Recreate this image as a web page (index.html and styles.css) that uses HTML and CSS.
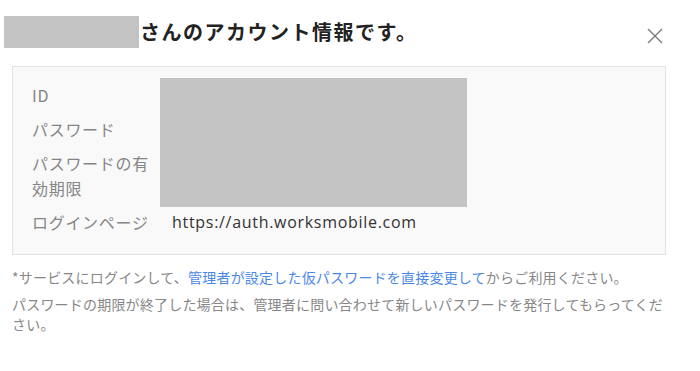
FILE: index.html
```html
<!DOCTYPE html>
<html lang="ja">
<head>
<meta charset="utf-8">
<title>アカウント情報</title>
<link rel="stylesheet" href="styles.css">
</head>
<body>
<div class="dialog">
  <div class="header">
    <h1 class="title"><span class="redact-name"></span>さんのアカウント情報です。</h1>
    <button class="close" aria-label="閉じる">
      <svg width="16" height="16" viewBox="0 0 16 16"><path d="M1 1L15 15M15 1L1 15" stroke="#7a7a7a" stroke-width="1.4" fill="none"/></svg>
    </button>
  </div>
  <div class="info">
    <div class="label r1">ID</div>
    <div class="label r2">パスワード</div>
    <div class="label r3">パスワードの有効期限</div>
    <div class="redact-values"></div>
    <div class="label r4">ログインページ</div>
    <div class="value r4">https://auth.worksmobile.com</div>
  </div>
  <p class="note">*サービスにログインして、<span class="link">管理者が設定した仮パスワードを直接変更して</span>からご利用ください。</p>
  <p class="note">パスワードの期限が終了した場合は、管理者に問い合わせて新しいパスワードを発行してもらってください。</p>
</div>
</body>
</html>
```
FILE: styles.css
```css
html, body {
  margin: 0;
  padding: 0;
  background: #fff;
}
body {
  font-family: "Noto Sans CJK JP", "Noto Sans", sans-serif;
}
.dialog {
  padding: 16px 34px 0 12px;
}
.header {
  display: flex;
  align-items: center;
  justify-content: space-between;
  height: 32px;
  margin-left: -8px;
}
.title {
  display: flex;
  align-items: center;
  margin: 0;
  font-size: 20px;
  font-weight: bold;
  color: #222;
  line-height: 32px;
  letter-spacing: 1.5px;
}
.redact-name {
  display: inline-block;
  width: 135px;
  height: 32px;
  background: #c3c3c3;
  margin-right: 1px;
}
.close {
  border: 0;
  background: none;
  padding: 0;
  width: 16px;
  height: 16px;
  margin-top: 8px;
  margin-right: 3px;
  cursor: pointer;
  display: flex;
}
.info {
  margin-top: 18px;
  border: 1px solid #e3e3e3;
  background: #f9f9f9;
  padding: 16px 20px 19px 19px;
  display: grid;
  grid-template-columns: 124px 1fr;
  column-gap: 16px;
  row-gap: 9px;
  font-size: 16px;
  line-height: 25px;
}
.label {
  color: #858585;
  grid-column: 1;
  letter-spacing: 0.7px;
}
.r1 { grid-row: 1; }
.r2 { grid-row: 2; }
.r3 { grid-row: 3; }
.r4 { grid-row: 4; }
.value {
  grid-column: 2;
  color: #333;
  font-family: "Open Sans", "Noto Sans", sans-serif;
  letter-spacing: 0.7px;
}
.redact-values {
  grid-column: 2;
  grid-row: 1 / 4;
  width: 307px;
  margin: -5px 0 -6px -12px;
  background: #c3c3c3;
}
.note {
  margin: 12px 0 0;
  font-size: 14px;
  line-height: 20px;
  color: #878787;
  letter-spacing: 0.2px;
}
.note + .note {
  margin-top: 7px;
}
.link {
  color: #4b88e6;
}
```
